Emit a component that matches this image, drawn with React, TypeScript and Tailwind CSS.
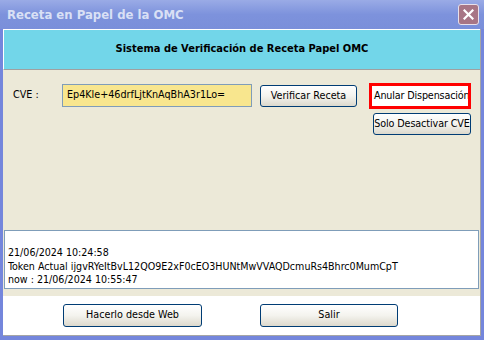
import React from 'react';

const font = "font-['DejaVu_Sans_Condensed','Liberation_Sans',sans-serif]";

const XpButton = ({ label, className }: { label: string; className?: string }) => (
    <button
        className={`flex items-center justify-center rounded-[3px] border border-[#003c74] bg-gradient-to-b from-white via-[#f4f3ee] to-[#dcd9cd] text-[10.7px] text-black ${className ?? ''}`}
    >
        {label}
    </button>
);

export default function App() {
    return (
        <div className={`${font} w-[484px] h-[340px] flex flex-col bg-[#7486dc] overflow-hidden`}>
            {/* title bar */}
            <div className="h-[29px] shrink-0 flex items-center justify-between pl-[7px] pr-[5px] bg-gradient-to-b from-[#9aabe6] via-[#7d92dc] to-[#7a8fda]">
                <span className="text-[13px] font-bold text-[#d9e0f5]">Receta en Papel de la OMC</span>
                <div className="w-[21px] h-[21px] rounded-[3px] border border-[#e8e0ea] bg-[#a77585] flex items-center justify-center">
                    <svg width="11" height="11" viewBox="0 0 11 11">
                        <path d="M1.5 1.5 L9.5 9.5 M9.5 1.5 L1.5 9.5" stroke="white" strokeWidth="2.2" strokeLinecap="square" />
                    </svg>
                </div>
            </div>

            {/* client */}
            <div className="flex-1 mx-[3px] mb-[4px] flex flex-col bg-[#ece9d8] border-r border-b border-[#a5a5a5]">
                <div className="h-[41px] shrink-0 flex items-center justify-center bg-[#72d6e9] border-t border-l border-white border-b border-b-[#a0a0a0]">
                    <span className="text-[11px] font-bold text-black">Sistema de Verificación de Receta Papel OMC</span>
                </div>

                <div className="h-[160px] shrink-0 pt-[14px] pl-[10px] flex items-start text-[10.7px]">
                    <span className="w-[49px] h-[23px] flex items-center text-black">CVE :</span>
                    <div className="w-[190px] h-[23px] border border-[#7f9db9] bg-[#f8e68e] flex items-center pl-[4px] text-black">
                        Ep4Kle+46drfLjtKnAqBhA3r1Lo=
                    </div>
                    <XpButton label="Verificar Receta" className="ml-[8px] mt-[1px] w-[97px] h-[22px]" />
                    <div className="ml-[12px] -mt-[1px] flex flex-col items-start">
                        <div className="w-[102px] h-[26px] border-[3px] border-[#ff0000] bg-white flex items-center overflow-hidden whitespace-nowrap pl-[2px] tracking-[-0.15px] text-black">
                            Anular Dispensación
                        </div>
                        <XpButton label="Solo Desactivar CVE" className="ml-[4px] mt-[4px] w-[98px] h-[22px] whitespace-nowrap overflow-hidden tracking-[-0.1px]" />
                    </div>
                </div>

                <div className="h-[59px] shrink-0 mx-[1px] border border-[#7f9db9] bg-white pt-[15px] pl-[3px] text-[10.6px] leading-[13.5px] text-black">
                    <div>21/06/2024 10:24:58</div>
                    <div>Token Actual ijgvRYeItBvL12QO9E2xF0cEO3HUNtMwVVAQDcmuRs4Bhrc0MumCpT</div>
                    <div>now : 21/06/2024 10:55:47</div>
                </div>

                <div className="h-[7px] shrink-0" />

                <div className="flex-1 bg-white pt-[8px] flex items-start">
                    <XpButton label="Hacerlo desde Web" className="ml-[60px] w-[139px] h-[23px]" />
                    <XpButton label="Salir" className="ml-[58px] w-[138px] h-[23px]" />
                </div>
            </div>
        </div>
    );
}
